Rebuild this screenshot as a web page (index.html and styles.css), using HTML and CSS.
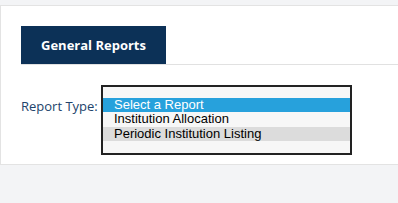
FILE: index.html
```html
<!DOCTYPE html>
<html lang="en">
<head>
  <meta charset="UTF-8" />
  <title>Reports</title>
  <link rel="stylesheet" href="styles.css">
</head>
<body>
  <div class="panel">
    <div class="tabs">
      <div class="tab active">General Reports</div>
    </div>

    <div class="report-row">
      <label class="report-label" for="reportType">Report Type:</label>
      <div class="listbox" id="reportType">
        <div class="option selected">Select a Report</div>
        <div class="option">Institution Allocation</div>
        <div class="option hover">Periodic Institution Listing</div>
      </div>
    </div>
  </div>
</body>
</html>
```

FILE: styles.css
```css
body {
  background-color: #f3f4f6;
  margin: 0;
  padding: 0;
  font-family: 'Open Sans', sans-serif;
}

.panel {
  margin-top: 5px;
  background-color: #fff;
  border: 1px solid #e3e3e3;
  border-right: none;
  padding: 20px 0 9px 20px;
}

.tabs {
  display: flex;
  border-bottom: 1px solid #e1e1e1;
}

.tab {
  height: 38px;
  line-height: 38px;
  padding: 0 20px;
  font-size: 13px;
  font-weight: bold;
  color: #fff;
}

.tab.active {
  background-color: #0c3157;
}

.report-row {
  display: flex;
  align-items: flex-start;
  margin-top: 20px;
}

.report-label {
  width: 80px;
  margin-top: 12px;
  font-size: 13px;
  line-height: 18px;
  color: #21436b;
}

.listbox {
  width: 247px;
  border: 2px solid #222;
  background-color: #f7f7f7;
  padding: 11px 0 12px;
  font-family: 'Liberation Sans', Arial, sans-serif;
  font-size: 13px;
  color: #000;
}

.option {
  height: 14.4px;
  line-height: 14.4px;
  padding-left: 11px;
  white-space: nowrap;
}

.option.selected {
  background-color: #27a1dc;
  color: #fff;
}

.option.hover {
  background-color: #dcdcdc;
}
```
